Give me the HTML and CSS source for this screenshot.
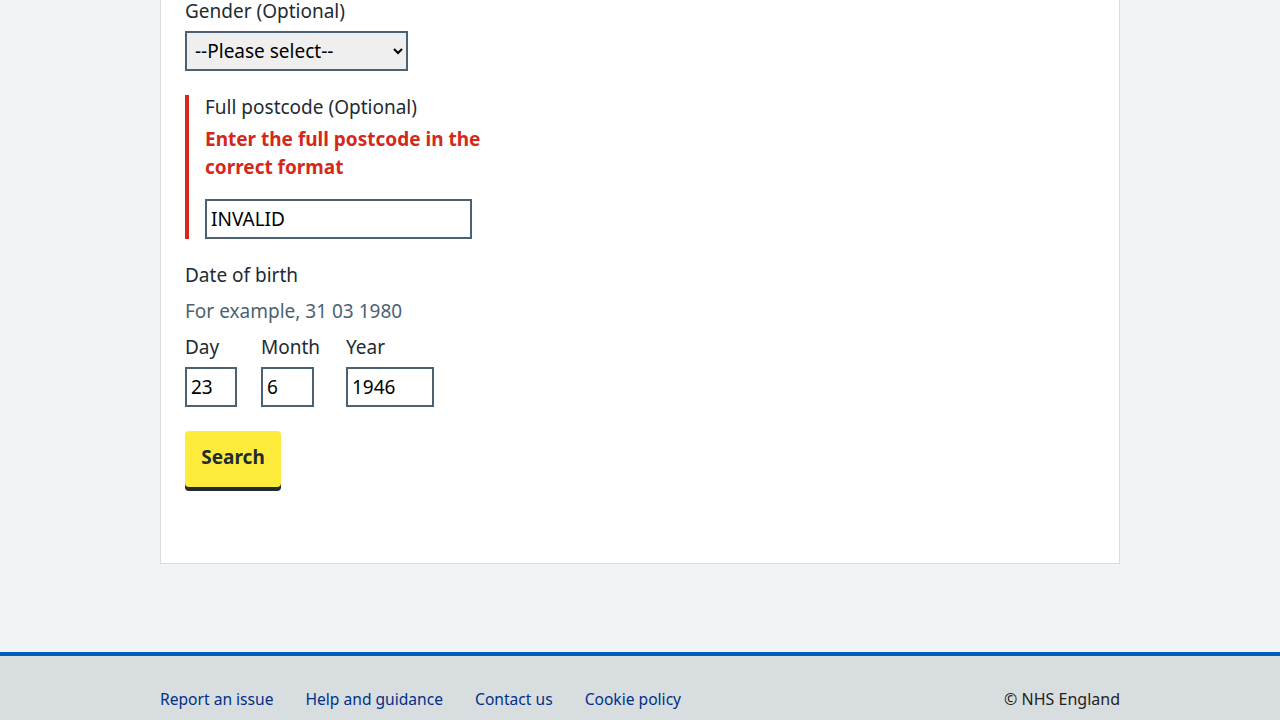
FILE: index.html
```html
<!DOCTYPE html>
<html lang="en">
<head>
<meta charset="utf-8">
<title>Search for a patient</title>
<link rel="stylesheet" href="styles.css">
</head>
<body>
<main class="main">
  <div class="container">
    <div class="card">
      <form class="form">
        <div class="form-group">
          <label class="label label--first" for="gender">Gender (Optional)</label>
          <select class="select" id="gender">
            <option>--Please select--</option>
            <option>Male</option>
            <option>Female</option>
          </select>
        </div>

        <div class="form-group form-group--error">
          <label class="label" for="postcode">Full postcode (Optional)</label>
          <span class="error-message">Enter the full postcode in the correct format</span>
          <input class="input input--postcode" id="postcode" type="text" value="INVALID">
        </div>

        <div class="form-group">
          <div class="label label--legend">Date of birth</div>
          <div class="hint">For example, 31 03 1980</div>
          <div class="date-input">
            <div class="date-item">
              <label class="label" for="day">Day</label>
              <input class="input input--day" id="day" type="text" value="23">
            </div>
            <div class="date-item date-item--month">
              <label class="label" for="month">Month</label>
              <input class="input input--month" id="month" type="text" value="6">
            </div>
            <div class="date-item">
              <label class="label" for="year">Year</label>
              <input class="input input--year" id="year" type="text" value="1946">
            </div>
          </div>
        </div>

        <button class="button" type="button">Search</button>
      </form>
    </div>
  </div>
</main>
<footer class="footer">
  <div class="container footer-inner">
    <ul class="footer-links">
      <li><a href="#">Report an issue</a></li>
      <li><a href="#">Help and guidance</a></li>
      <li><a href="#">Contact us</a></li>
      <li><a href="#">Cookie policy</a></li>
    </ul>
    <p class="copyright">© NHS England</p>
  </div>
</footer>
</body>
</html>
```

FILE: styles.css
```css
* { box-sizing: border-box; }

html, body {
  margin: 0;
  padding: 0;
}

body {
  background: #f0f4f5;
  color: #212b32;
  font-family: "Noto Sans", "Open Sans", sans-serif;
  font-size: 19px;
  line-height: 28px;
}

.container {
  width: 960px;
  margin: 0 auto;
}

.main {
  margin-top: -48px;
  padding-bottom: 88px;
}

.card {
  background: #fff;
  border: 1px solid #d8dde0;
  padding: 46px 24px 72px;
}

.form {
  display: flex;
  flex-direction: column;
  align-items: flex-start;
}

.form-group {
  display: flex;
  flex-direction: column;
  align-items: flex-start;
  margin-bottom: 24px;
}

.form-group--error {
  border-left: 4px solid #d5281b;
  padding-left: 16px;
  width: 320px;
}

.label {
  display: block;
  line-height: 24px;
  margin-bottom: 6px;
  font-weight: 400;
}

.label--first {
  margin-bottom: 8px;
}

.label--legend {
  margin-bottom: 10px;
}

.hint {
  color: #4c6272;
  line-height: 28px;
  margin-bottom: 10px;
}

.error-message {
  display: block;
  color: #d5281b;
  font-weight: 700;
  line-height: 28px;
  margin-bottom: 18px;
}

.select {
  height: 40px;
  width: 223px;
  border: 2px solid #4c6272;
  border-radius: 0;
  background: #efefef;
  color: #000;
  font-family: "Noto Sans", sans-serif;
  font-size: 19px;
  padding: 0 4px;
  margin: 0;
}

.input {
  height: 40px;
  border: 2px solid #4c6272;
  border-radius: 0;
  background: #fff;
  color: #000;
  font-family: "Noto Sans", sans-serif;
  font-size: 19px;
  padding: 0 4px;
  margin: 0;
}

.input--postcode { width: 267px; }
.input--day { width: 52px; }
.input--month { width: 53px; }
.input--year { width: 88px; }

.date-input {
  display: flex;
  gap: 24px;
}

.date-item {
  display: flex;
  flex-direction: column;
  align-items: flex-start;
}

.date-item .label {
  margin-bottom: 8px;
}

.date-item--month {
  min-width: 61px;
}

.button {
  background: #ffeb3b;
  color: #212b32;
  border: 0;
  border-radius: 4px;
  box-shadow: 0 4px 0 #212b32;
  font-family: "Noto Sans", sans-serif;
  font-weight: 700;
  font-size: 19px;
  line-height: 24px;
  padding: 0 0 4px;
  width: 96px;
  height: 56px;
  margin: 0 0 4px;
  cursor: pointer;
}

.footer {
  background: #d8dde0;
  border-top: 4px solid #005eb8;
  padding: 31px 0 40px;
}

.footer-inner {
  display: flex;
  justify-content: space-between;
  align-items: flex-start;
}

.footer-links {
  display: flex;
  gap: 32px;
  list-style: none;
  margin: 0;
  padding: 0;
  font-size: 15.6px;
  line-height: 24px;
}

.footer-links a {
  color: #003087;
  text-decoration: none;
}

.copyright {
  margin: 0;
  font-size: 16px;
  line-height: 24px;
  color: #231f20;
}
```
